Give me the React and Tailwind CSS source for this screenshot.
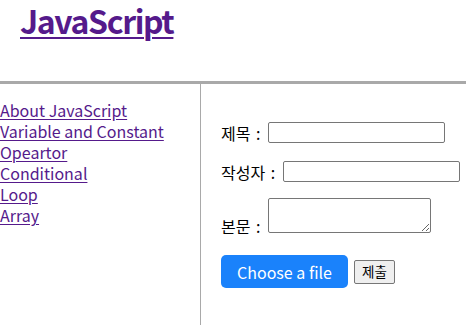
import React from 'react';

const menu = ['About JavaScript', 'Variable and Constant', 'Opeartor', 'Conditional', 'Loop', 'Array'];

const App = () => {
  return (
    <div className="min-h-[325px] bg-white text-black font-['Noto_Sans_CJK_KR',sans-serif] flex flex-col">
      {/* Header */}
      <div className="h-[81px] pl-[20px]">
        <h1 className="text-[32px] leading-[40px] font-bold tracking-[-1.4px]">
          <a href="#" className="text-[#551a8b] underline decoration-2 underline-offset-[3px]">JavaScript</a>
        </h1>
      </div>
      <div className="h-[3px] bg-[#a9a9a9]" />

      <div className="flex flex-1">
        {/* Nav */}
        <nav className="w-[201px] shrink-0 border-r border-[#a9a9a9] pt-[16px] flex flex-col items-start">
          {menu.map((item) => (
            <a key={item} href="#" className="text-[16px] leading-[21px] text-[#551a8b] underline underline-offset-2">
              {item}
            </a>
          ))}
        </nav>

        {/* Form */}
        <div className="flex-1 pl-[20px] text-[16px]">
          <div className="mt-[38px] flex items-center h-[21px]">
            <span>제목 <span className="ml-[2px]">:</span></span>
            <input type="text" className="ml-[8px] w-[177px] h-[21px] border border-[#767676] rounded-[2px]" />
          </div>
          <div className="mt-[18px] flex items-center h-[21px]">
            <span>작성자 <span className="ml-[2px]">:</span></span>
            <input type="text" className="ml-[8px] w-[177px] h-[21px] border border-[#767676] rounded-[2px]" />
          </div>
          <div className="mt-[16px] leading-[21px]">
            <span>본문 <span className="ml-[2px]">:</span></span>
            <textarea className="ml-[8px] w-[163px] h-[35px] border border-[#767676] rounded-[2px] align-baseline resize" />
          </div>
          <div className="mt-[18px] flex items-center gap-[6px]">
            <button className="h-[33px] w-[127px] rounded-[5px] bg-[#1a82fb] text-white text-[16px]">
              Choose a file
            </button>
            <button className="h-[24px] px-[7px] border border-[#767676] rounded-[2px] bg-[#efefef] text-[13.5px]">
              제출
            </button>
          </div>
        </div>
      </div>
    </div>
  );
};

export default App;
